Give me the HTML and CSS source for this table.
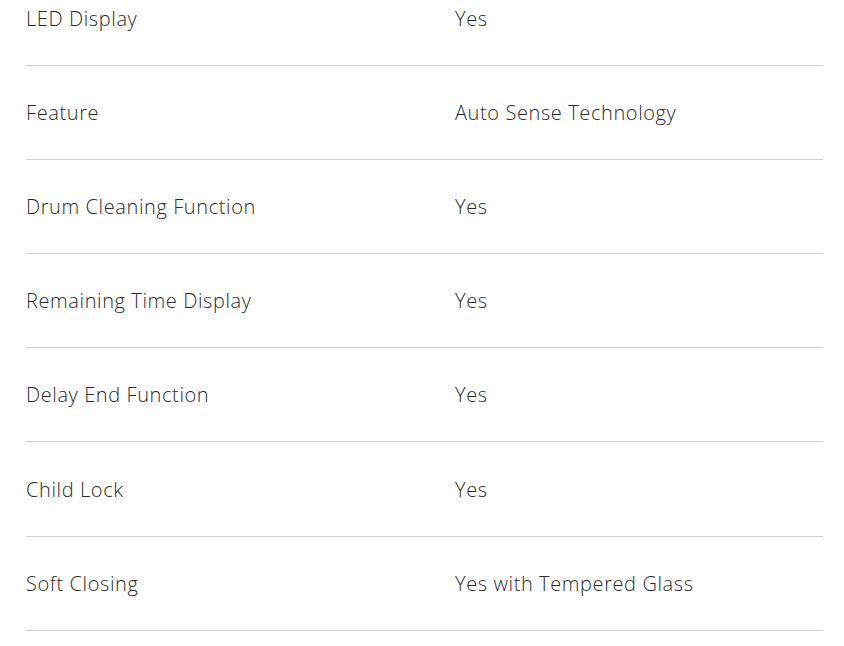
FILE: index.html
```html
<!DOCTYPE html>
<html>
<head>
<meta charset="utf-8">
<link rel="stylesheet" href="styles.css">
</head>
<body>
<div class="specs">
  <div class="row"><div class="label">LED Display</div><div class="value">Yes</div></div>
  <div class="row"><div class="label">Feature</div><div class="value">Auto Sense Technology</div></div>
  <div class="row"><div class="label">Drum Cleaning Function</div><div class="value">Yes</div></div>
  <div class="row"><div class="label">Remaining Time Display</div><div class="value">Yes</div></div>
  <div class="row"><div class="label">Delay End Function</div><div class="value">Yes</div></div>
  <div class="row"><div class="label">Child Lock</div><div class="value">Yes</div></div>
  <div class="row"><div class="label">Soft Closing</div><div class="value">Yes with Tempered Glass</div></div>
</div>
</body>
</html>
```

FILE: styles.css
```css
html, body {
  margin: 0;
  padding: 0;
  background: #fff;
}
body {
  font-family: "Open Sans", Lato, sans-serif;
  font-weight: 300;
  color: #2b2b2b;
  overflow: hidden;
}
.specs {
  width: 797px;
  margin: -28px 0 0 26px;
}
.row {
  display: flex;
  align-items: center;
  height: 93.1px;
  border-bottom: 1px solid #d0d0d0;
  font-size: 20px;
  letter-spacing: 0.6px;
}
.label {
  width: 429px;
  flex: none;
}
.value {
  flex: 1;
}
```
